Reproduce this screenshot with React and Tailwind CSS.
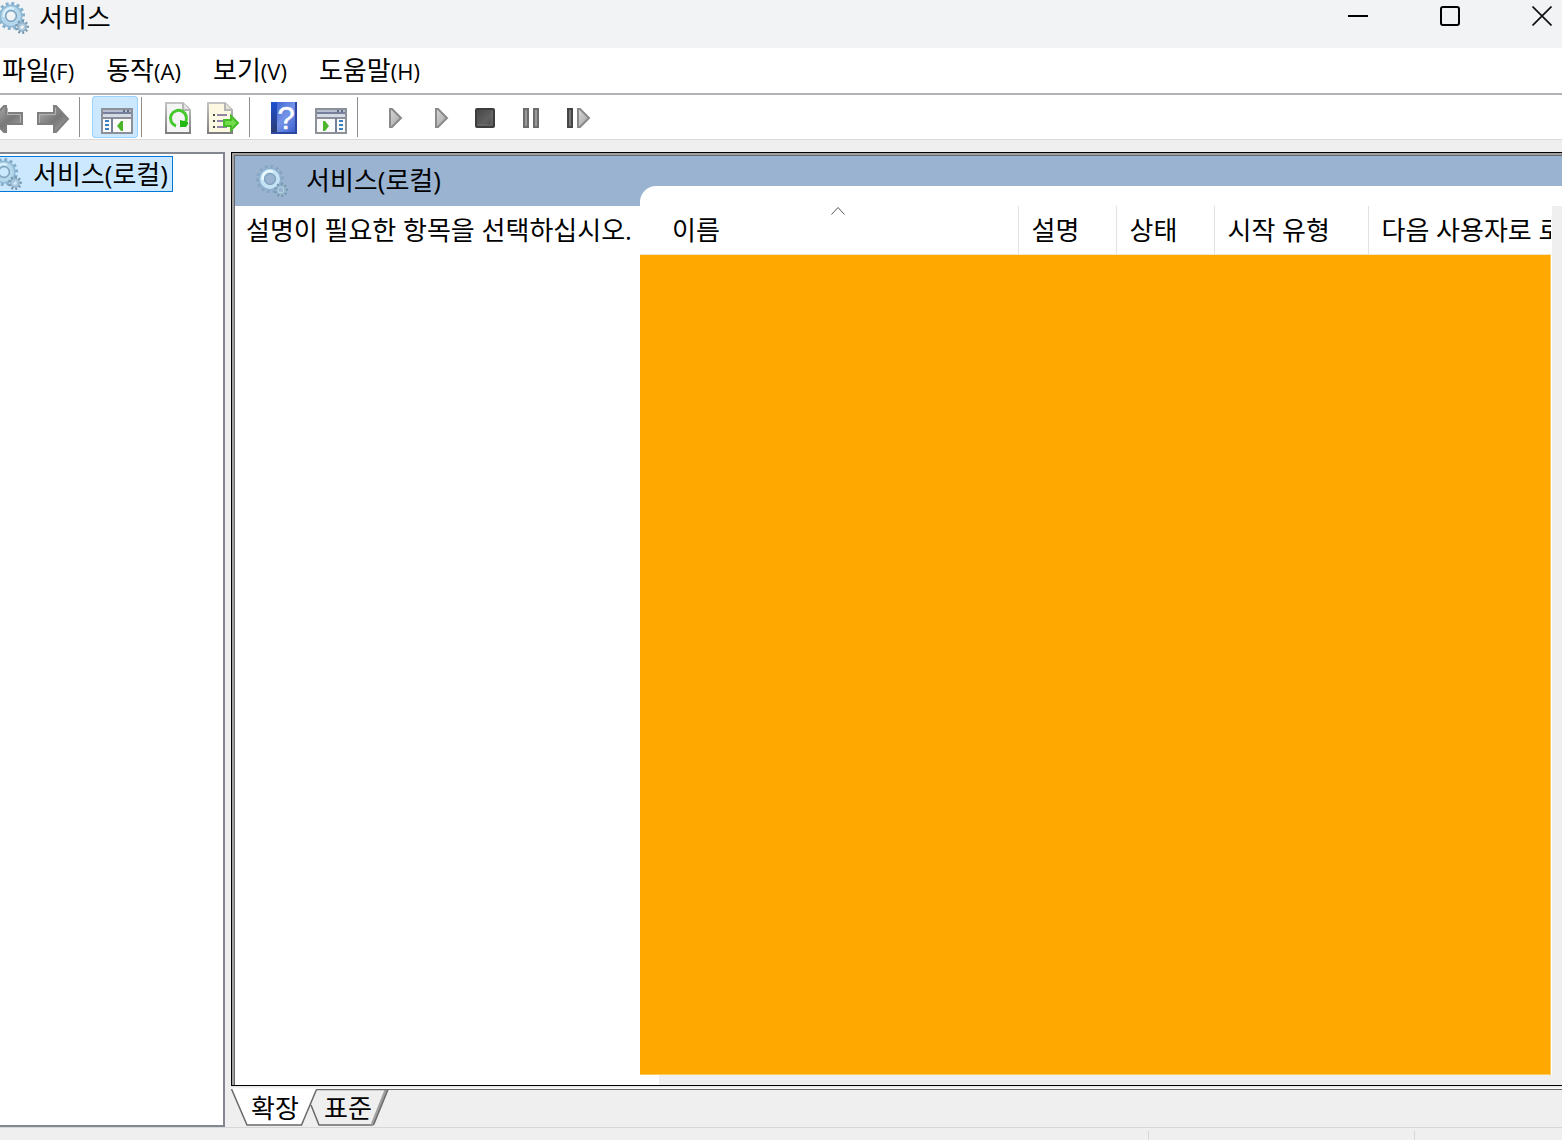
import React, { useState } from 'react';

const teeth = (cx, cy, r, count, w, h) =>
  Array.from({ length: count }, (_, i) => (
    <rect
      key={i}
      x={cx - w / 2}
      y={cy - r}
      width={w}
      height={h}
      transform={`rotate(${(360 / count) * i + 8} ${cx} ${cy})`}
    />
  ));

const GearIcon = ({ faded, className = '' }) => (
  <svg width="36" height="36" viewBox="0 0 36 36" className={`shrink-0 ${className}`} aria-hidden="true">
    <g fill={faded ? '#86a5c2' : '#84afcb'}>{teeth(16, 16, 14, 14, 3, 4)}</g>
    <circle cx="16" cy="16" r="8" fill="none" stroke={faded ? '#8fb0cd' : '#8fb9d4'} strokeWidth="7" />
    <circle cx="16" cy="16" r="8" fill="none" stroke={faded ? '#c4e4f6' : '#b4d7ec'} strokeWidth="4" />
    <path d="M9 17a7 7 0 0 1 10-8" fill="none" stroke={faded ? '#eefaff' : '#dcf1fb'} strokeWidth="2" />
    <circle cx="16" cy="16" r="5.5" fill="none" stroke="#7d9db8" strokeWidth="1" />
    <g fill="#7596ae">{teeth(27, 27, 7, 9, 2, 3)}</g>
    <circle cx="27" cy="27" r="3.5" fill="none" stroke="#92b3c9" strokeWidth="3" />
    <circle cx="27" cy="27" r="3" fill="none" stroke="#bad4e3" strokeWidth="1" />
  </svg>
);

// every toolbar drawing shares the 46x44 button box
const ToolSvg = ({ children }) => (
  <svg width="46" height="44" viewBox="0 0 46 44" className="shrink-0" aria-hidden="true">
    <defs>
      <linearGradient id="arrowGrey" x1="0" y1="0" x2="1" y2="1">
        <stop offset="0" stopColor="#b5b5b5" />
        <stop offset="0.55" stopColor="#777777" />
        <stop offset="1" stopColor="#a8a8a8" />
      </linearGradient>
      <linearGradient id="playGrey" x1="0" y1="0" x2="1" y2="1">
        <stop offset="0" stopColor="#d8d8d8" />
        <stop offset="1" stopColor="#a2a2a2" />
      </linearGradient>
      <linearGradient id="helpBlue" x1="0" y1="0" x2="1" y2="1">
        <stop offset="0" stopColor="#3159cc" />
        <stop offset="0.5" stopColor="#7594e8" />
        <stop offset="1" stopColor="#3158c8" />
      </linearGradient>
      <linearGradient id="helpSpine" x1="0" y1="0" x2="0" y2="1">
        <stop offset="0" stopColor="#1e50d2" />
        <stop offset="1" stopColor="#2c3b6c" />
      </linearGradient>
      <linearGradient id="pageEdge" x1="0" y1="0" x2="0" y2="1">
        <stop offset="0" stopColor="#c4c4c4" />
        <stop offset="1" stopColor="#7e7e7e" />
      </linearGradient>
      <linearGradient id="stopDark" x1="0" y1="0" x2="1" y2="1">
        <stop offset="0" stopColor="#454545" />
        <stop offset="0.6" stopColor="#606060" />
        <stop offset="1" stopColor="#484848" />
      </linearGradient>
    </defs>
    {children}
  </svg>
);

const BackIcon = () => (
  <ToolSvg>
    <path d="M8 24 20 11h2v7h16v11H22v8h-2z" fill="url(#arrowGrey)" stroke="#7f7f7f" strokeWidth="2" />
    <path d="M23.500 13v6.500h13v8" fill="none" stroke="#b4b4b4" />
  </ToolSvg>
);

const ForwardIcon = () => (
  <ToolSvg>
    <path d="M38 24 26 11h-2v7H8v11h16v8h2z" fill="url(#arrowGrey)" stroke="#7f7f7f" strokeWidth="2" />
    <path d="M9.500 28v-8.500H25.500V13" fill="none" stroke="#b4b4b4" />
  </ToolSvg>
);

const ConsoleTreeIcon = () => (
  <ToolSvg>
    <rect x="10" y="14" width="30" height="24" fill="#fafafa" stroke="#8b9099" strokeWidth="2" />
    <path d="M11 16h28" stroke="#b7bfcf" strokeWidth="2" />
    <path d="M31 16h2m2 0h2" stroke="#5c6b89" strokeWidth="2" />
    <path d="M11 18h28" stroke="#76809a" strokeWidth="2" />
    <path d="M11 20.500h28" stroke="#d5dae4" strokeWidth="3" />
    <path d="M11 23h28" stroke="#8b9099" strokeWidth="2" />
    <path d="M20 23v14" stroke="#76809a" strokeWidth="2" />
    <path d="M13 26h4m-4 4h4m-4 4h4" stroke="#3d7fc4" strokeWidth="2" />
    <path d="M25 31 29 26h2v10h-2z" fill="#4cb52c" />
  </ToolSvg>
);

const ActionPaneIcon = () => (
  <ToolSvg>
    <rect x="8" y="14" width="30" height="24" fill="#fafafa" stroke="#8b9099" strokeWidth="2" />
    <path d="M9 16h28" stroke="#b7bfcf" strokeWidth="2" />
    <path d="M29 16h2m2 0h2" stroke="#5c6b89" strokeWidth="2" />
    <path d="M9 18h28" stroke="#76809a" strokeWidth="2" />
    <path d="M9 20.500h28" stroke="#d5dae4" strokeWidth="3" />
    <path d="M9 23h28" stroke="#8b9099" strokeWidth="2" />
    <path d="M28 23v14" stroke="#76809a" strokeWidth="2" />
    <path d="M31 26h4m-4 4h4m-4 4h4" stroke="#3d7fc4" strokeWidth="2" />
    <path d="M21 31 17 26h-2v10h2z" fill="#4cb52c" />
  </ToolSvg>
);

const RefreshIcon = () => (
  <ToolSvg>
    <path d="M12 8h17l7 7v23H12z" fill="#f4f5f4" stroke="url(#pageEdge)" strokeWidth="2" />
    <path d="M29 8v7h7" fill="#e3e3e3" stroke="#b5b5b5" strokeWidth="2" />
    <path d="M22 31a8 8 0 1 1 9-3" fill="none" stroke="#45c92f" strokeWidth="3" />
    <path d="M26 25 34 27v2l-2 3h-6z" fill="#23b814" />
  </ToolSvg>
);

const ExportIcon = () => (
  <ToolSvg>
    <path d="M8 8h17l7 7v23H8z" fill="#fdf8e2" stroke="url(#pageEdge)" strokeWidth="2" />
    <path d="M25 8v7h7" fill="#e8e4d8" stroke="#b5b5b5" strokeWidth="2" />
    <path d="M13 20h2m-2 6h2m-2 6h2" stroke="#4a4a4a" strokeWidth="2" />
    <path d="M17 20h10m-10 6h8m-8 6h10" stroke="#8e86a4" strokeWidth="2" />
    <path d="M38 28 31 21v4h-7v6h7v4z" fill="#72dc4a" stroke="#46bd28" strokeWidth="2" />
  </ToolSvg>
);

const HelpIcon = () => (
  <ToolSvg>
    <rect x="9" y="7" width="26" height="32" fill="url(#helpBlue)" />
    <rect x="9" y="7" width="6" height="32" fill="url(#helpSpine)" />
    <path d="M9 38h26M34 7v32" stroke="#2b479f" strokeWidth="2" fill="none" />
    <text x="24" y="34" textAnchor="middle" fontSize="31" fill="#ffffff" stroke="#ffffff" strokeWidth="0.500" fontFamily="Liberation Sans, sans-serif">?</text>
  </ToolSvg>
);

const PlayIcon = () => (
  <ToolSvg>
    <path d="M20 14h2l9 9-9 9h-2z" fill="url(#playGrey)" stroke="#8a8a8a" strokeWidth="2" />
  </ToolSvg>
);

const StopIcon = () => (
  <ToolSvg>
    <rect x="14" y="14" width="18" height="18" rx="1" fill="url(#stopDark)" stroke="#3d3d3d" strokeWidth="2" />
    <path d="M16 30h14V16" fill="none" stroke="#707070" />
  </ToolSvg>
);

const PauseIcon = () => (
  <ToolSvg>
    <path d="M16 14h4v18h-4zM26 14h4v18h-4z" fill="#9a9a9a" stroke="#6c6c6c" strokeWidth="2" />
  </ToolSvg>
);

const RestartIcon = () => (
  <ToolSvg>
    <path d="M14 14h4v18h-4z" fill="#777777" stroke="#464646" strokeWidth="2" />
    <path d="M24 14h2l9 9-9 9h-2z" fill="url(#playGrey)" stroke="#8a8a8a" strokeWidth="2" />
  </ToolSvg>
);

const menus = [
  { label: '파일', key: 'F' },
  { label: '동작', key: 'A' },
  { label: '보기', key: 'V' },
  { label: '도움말', key: 'H' },
];

const toolGroups = [
  [
    { name: '뒤로', Icon: BackIcon },
    { name: '앞으로', Icon: ForwardIcon },
  ],
  [{ name: '콘솔 트리 표시/숨기기', Icon: ConsoleTreeIcon, active: true }],
  [
    { name: '새로 고침', Icon: RefreshIcon },
    { name: '목록 내보내기', Icon: ExportIcon },
  ],
  [
    { name: '도움말', Icon: HelpIcon },
    { name: '작업 창 표시/숨기기', Icon: ActionPaneIcon },
  ],
  [
    { name: '서비스 시작', Icon: PlayIcon },
    { name: '서비스 계속', Icon: PlayIcon },
    { name: '서비스 중지', Icon: StopIcon },
    { name: '서비스 일시 중지', Icon: PauseIcon },
    { name: '서비스 다시 시작', Icon: RestartIcon },
  ],
];

const columns = [
  { label: '이름', width: 'w-[359px]', sorted: true },
  { label: '설명', width: 'w-[98px]' },
  { label: '상태', width: 'w-[98px]' },
  { label: '시작 유형', width: 'w-[154px]' },
  { label: '다음 사용자로 로', width: 'w-[260px]' },
];

const TitleBar = () => (
  <header className="flex h-12 shrink-0 items-start overflow-hidden bg-[#f1f3f5]">
    <GearIcon className="-ml-[5px]" />
    <h1 className="ml-2 flex-1 leading-[34px]">서비스</h1>
    <div className="-mr-[26px] flex">
      <button aria-label="최소화" className="flex h-8 w-[92px] items-center justify-center">
        <svg width="20" height="20" viewBox="0 0 20 20"><path d="M0 10h20" stroke="#000" strokeWidth="2" /></svg>
      </button>
      <button aria-label="최대화" className="flex h-8 w-[92px] items-center justify-center">
        <svg width="20" height="20" viewBox="0 0 20 20"><rect x="1" y="1" width="18" height="18" rx="2" fill="none" stroke="#000" strokeWidth="2" /></svg>
      </button>
      <button aria-label="닫기" className="flex h-8 w-[92px] items-center justify-center">
        <svg width="20" height="20" viewBox="0 0 20 20"><path d="m.5.5 19 19m0-19-19 19" stroke="#111" strokeWidth="1.700" /></svg>
      </button>
    </div>
  </header>
);

const MenuBar = () => (
  <nav className="flex h-[47px] shrink-0 items-center gap-8 border-b-2 border-[#b1b2b6] bg-white pl-0.5">
    {menus.map((m) => (
      <button key={m.key} className="whitespace-nowrap">
        {m.label}<span className="text-[22px]">({m.key})</span>
      </button>
    ))}
  </nav>
);

const Toolbar = () => (
  <div role="toolbar" className="flex h-[45px] shrink-0 items-center overflow-hidden border-b border-[#d9d9d9] bg-white">
    {toolGroups.map((group, gi) => (
      <React.Fragment key={gi}>
        {gi > 0 && <span className="ml-[3px] mr-3 h-10 w-px shrink-0 bg-[#8e8e8e]" />}
        {group.map(({ name, Icon, active }, i) => (
          <button
            key={name}
            aria-label={name}
            className={`flex h-[42px] w-[46px] shrink-0 items-center justify-center ${gi === 0 && i === 0 ? '-ml-4' : ''} ${
              active ? 'rounded-sm bg-[#cce8ff] ring-1 ring-inset ring-[#99d1ff]' : ''
            }`}
          >
            <Icon />
          </button>
        ))}
      </React.Fragment>
    ))}
  </div>
);

const ServiceList = () => (
  <section className="flex min-w-0 flex-1 flex-col bg-[#9ab3d0]">
    <div className="mt-[30px] flex flex-1 flex-col rounded-tl-[16px] bg-white pt-5">
      <div className="flex flex-1">
        <div className="mr-px flex min-w-0 flex-1 flex-col overflow-hidden">
          <div className="overflow-hidden pl-[19px]">
            <table className="w-[969px] table-fixed border-collapse">
              <thead>
                <tr>
                  {columns.map((col) => (
                    <th
                      key={col.label}
                      scope="col"
                      aria-sort={col.sorted ? 'ascending' : undefined}
                      className={`relative h-12 whitespace-nowrap border-r border-[#e2e2e2] p-0 pl-[13px] text-left font-normal ${col.width}`}
                    >
                      {col.label}
                      {col.sorted && (
                        <svg className="absolute left-1/2 top-0 -translate-x-1/2" width="14" height="10" viewBox="0 0 14 10">
                          <path d="m.5 8.500 6.500-7 6.500 7" fill="none" stroke="#555" />
                        </svg>
                      )}
                    </th>
                  ))}
                </tr>
              </thead>
            </table>
          </div>
          <div className="flex-1 border border-l-0 border-[#ffc95c] border-t-[#f5e6c8] bg-[#ffa900]" />
        </div>
        <div className="w-[10px] shrink-0 bg-[#efefef]" />
      </div>
      <div className="ml-[19px] h-[10px] bg-[#efefef]" />
    </div>
  </section>
);

const ViewTabs = ({ tab, onChange }) => (
  <div role="tablist" className="relative flex h-[41px] shrink-0 bg-[#efefef]">
    <div className="absolute inset-x-0 top-0 h-1 border-b border-[#696969] bg-gradient-to-b from-[#e3e3e3] to-white" />
    <button role="tab" aria-selected={tab === 'extended'} onClick={() => onChange('extended')} className="relative z-10 mt-[3px] h-[37px] w-[86px] pl-0.5">
      <svg className="absolute inset-0" width="86" height="37" viewBox="0 0 86 37">
        <path d="M0 0 16 36H70L85.500 0z" fill={tab === 'extended' ? '#fff' : '#efefef'} />
        <path d="M.5 0 16 36H70.500L85.500.5" fill="none" stroke="#696969" strokeWidth="1.500" />
      </svg>
      <span className="relative block leading-[34px]">확장</span>
    </button>
    <button role="tab" aria-selected={tab === 'standard'} onClick={() => onChange('standard')} className="relative mt-[3px] h-[37px] w-[72px] pr-2.5">
      <svg className="absolute inset-y-0 -left-2" width="80" height="37" viewBox="0 0 80 37">
        <path d="M2 16 9 36H64L78 .5H8z" fill={tab === 'standard' ? '#fff' : '#efefef'} />
        <path d="M2 16 10 36H64" fill="none" stroke="#696969" strokeWidth="1.500" />
        <path d="M63 36 77 1" fill="none" stroke="#a0a0a0" strokeWidth="3" />
        <path d="M64.500 36 79 .5H8" fill="none" stroke="#696969" strokeWidth="1.500" />
      </svg>
      <span className="relative block leading-[34px]">표준</span>
    </button>
  </div>
);

const App = () => {
  const [tab, setTab] = useState('extended');

  return (
    <div className="flex min-h-screen flex-col overflow-hidden bg-[#efefef] font-['Open_Sans','Noto_Sans_CJK_KR',sans-serif] text-[26px] leading-9 text-black">
      <TitleBar />
      <MenuBar />
      <Toolbar />

      <main className="flex flex-1 pt-3">
        {/* Console tree */}
        <aside className="mr-1.5 w-[225px] shrink-0 border-2 border-l-0 border-[#828790] bg-white pt-0.5">
          <button className="flex h-9 w-[173px] items-center overflow-hidden whitespace-nowrap border border-l-0 border-[#0078d7] bg-[#cce8ff]">
            <GearIcon className="-ml-3" />
            <span className="ml-[9px]">서비스(로컬)</span>
          </button>
        </aside>

        <div className="flex min-w-0 flex-1 flex-col">
          <div className="flex flex-1 border-b border-l border-t border-black">
            <div className="flex min-w-0 flex-1 border-l-2 border-t-2 border-[#a0a0a0]">
              <div className="flex min-w-0 flex-1 border-l border-t border-[#696969] bg-white">
                <section className="w-[405px] shrink-0">
                  <h2 className="flex h-[50px] items-center bg-[#9ab3d0] pl-[19px]">
                    <GearIcon faded />
                    <span className="ml-4 pb-0.5">서비스(로컬)</span>
                  </h2>
                  <p className="whitespace-nowrap pl-[11px] pt-1.5">설명이 필요한 항목을 선택하십시오.</p>
                </section>
                <ServiceList />
              </div>
            </div>
          </div>
          <ViewTabs tab={tab} onChange={setTab} />
        </div>
      </main>

      <footer className="flex h-[13px] shrink-0 justify-end border-t border-[#d7d7d7] pt-[3px]">
        <div className="w-[266px] border-l border-[#d7d7d7]" />
        <div className="w-[148px] border-l border-[#d7d7d7]" />
      </footer>
    </div>
  );
};

export default App;
